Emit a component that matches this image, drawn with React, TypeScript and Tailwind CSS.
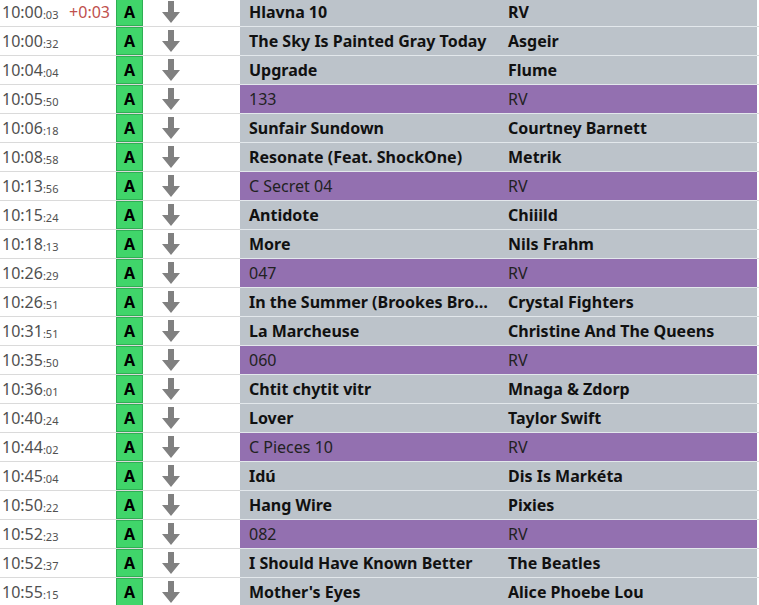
import React from "react";

type Row = {
  hm: string;
  s: string;
  diff?: string;
  title: string;
  artist: string;
  jingle?: boolean;
};

const rows: Row[] = [
  { hm: "10:00", s: ":03", diff: "+0:03", title: "Hlavna 10", artist: "RV" },
  { hm: "10:00", s: ":32", title: "The Sky Is Painted Gray Today", artist: "Asgeir" },
  { hm: "10:04", s: ":04", title: "Upgrade", artist: "Flume" },
  { hm: "10:05", s: ":50", title: "133", artist: "RV", jingle: true },
  { hm: "10:06", s: ":18", title: "Sunfair Sundown", artist: "Courtney Barnett" },
  { hm: "10:08", s: ":58", title: "Resonate (Feat. ShockOne)", artist: "Metrik" },
  { hm: "10:13", s: ":56", title: "C Secret 04", artist: "RV", jingle: true },
  { hm: "10:15", s: ":24", title: "Antidote", artist: "Chiiild" },
  { hm: "10:18", s: ":13", title: "More", artist: "Nils Frahm" },
  { hm: "10:26", s: ":29", title: "047", artist: "RV", jingle: true },
  { hm: "10:26", s: ":51", title: "In the Summer (Brookes Brothers Remix)", artist: "Crystal Fighters" },
  { hm: "10:31", s: ":51", title: "La Marcheuse", artist: "Christine And The Queens" },
  { hm: "10:35", s: ":50", title: "060", artist: "RV", jingle: true },
  { hm: "10:36", s: ":01", title: "Chtit chytit vitr", artist: "Mnaga & Zdorp" },
  { hm: "10:40", s: ":24", title: "Lover", artist: "Taylor Swift" },
  { hm: "10:44", s: ":02", title: "C Pieces 10", artist: "RV", jingle: true },
  { hm: "10:45", s: ":04", title: "Idú", artist: "Dis Is Markéta" },
  { hm: "10:50", s: ":22", title: "Hang Wire", artist: "Pixies" },
  { hm: "10:52", s: ":23", title: "082", artist: "RV", jingle: true },
  { hm: "10:52", s: ":37", title: "I Should Have Known Better", artist: "The Beatles" },
  { hm: "10:55", s: ":15", title: "Mother's Eyes", artist: "Alice Phoebe Lou" },
];

function DownArrow() {
  return (
    <svg width="18" height="22" viewBox="0 0 18 22">
      <path d="M6 0 H12 V11 H18 L9 22 L0 11 H6 Z" fill="#808080" />
    </svg>
  );
}

export default function App() {
  return (
    <div
      className="w-[759px] h-[605px] overflow-hidden bg-white"
      style={{ fontFamily: '"Noto Sans", "Open Sans", sans-serif' }}
    >
      <div className="-mt-[2px]">
        {rows.map((r, i) => (
          <div key={i} className="flex h-[29px] border-b border-[#dadada]">
            <div className="w-[116px] flex items-center pl-[2px] text-[#505050]">
              <span className="text-[16px] leading-none">{r.hm}</span>
              <span className="text-[11px] leading-none mt-[5px]">{r.s}</span>
              {r.diff && (
                <span className="ml-auto mr-[6px] text-[16px] leading-none text-[#c0504d]">{r.diff}</span>
              )}
            </div>
            <div className="w-[27px] bg-[#40d56a] border border-[#2fae54] flex items-center justify-center font-bold text-[16px] text-black">
              A
            </div>
            <div className="w-[97px] flex items-center pl-[19px]">
              <DownArrow />
            </div>
            <div
              className={
                "w-[517px] flex items-center text-[16px] border-b border-[#e3e8ec] -mb-px " +
                (r.jingle ? "bg-[#9370b0] font-normal text-[#222]" : "bg-[#bcc3ca] font-bold text-[#111]")
              }
            >
              <div className="w-[259px] pl-[9px] pr-[8px] truncate">{r.title}</div>
              <div className="flex-1 pl-[9px] truncate">{r.artist}</div>
            </div>
          </div>
        ))}
      </div>
    </div>
  );
}
